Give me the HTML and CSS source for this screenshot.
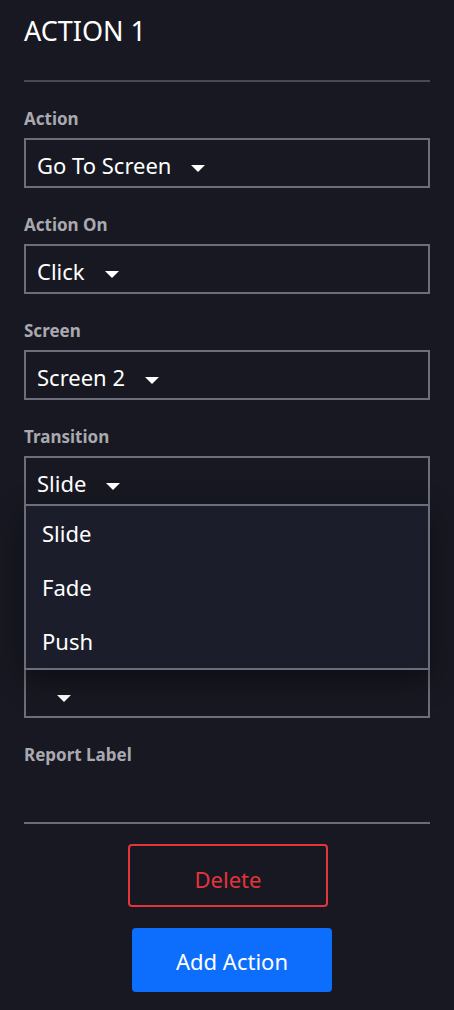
FILE: index.html
```html
<!DOCTYPE html>
<html>
<head>
<meta charset="utf-8">
<link rel="stylesheet" href="styles.css">
</head>
<body>
<div class="panel">
  <h2 class="title">ACTION 1</h2>
  <div class="rule"></div>

  <div class="field">
    <div class="label">Action</div>
    <div class="select"><span class="value">Go To Screen</span><span class="caret"></span></div>
  </div>

  <div class="field">
    <div class="label">Action On</div>
    <div class="select"><span class="value">Click</span><span class="caret"></span></div>
  </div>

  <div class="field">
    <div class="label">Screen</div>
    <div class="select"><span class="value">Screen 2</span><span class="caret"></span></div>
  </div>

  <div class="field dropdown-host">
    <div class="label">Transition</div>
    <div class="select"><span class="value">Slide</span><span class="caret"></span></div>
    <ul class="menu">
      <li>Slide</li>
      <li>Fade</li>
      <li>Push</li>
    </ul>
  </div>

  <div class="field">
    <div class="label"></div>
    <div class="select"><span class="value"></span></div>
  </div>

  <div class="field">
    <div class="label"></div>
    <div class="select"><span class="value"></span><span class="caret"></span></div>
  </div>

  <div class="field report">
    <div class="label">Report Label</div>
  </div>

  <div class="rule bottom"></div>

  <div class="buttons">
    <button class="btn delete">Delete</button>
    <button class="btn add">Add Action</button>
  </div>
</div>
</body>
</html>
```

FILE: styles.css
```css
html, body {
  margin: 0;
  padding: 0;
  background: #171821;
  height: 100%;
}
body {
  font-family: "Noto Sans", "Open Sans", sans-serif;
  color: #ffffff;
}
.panel {
  padding: 13px 24px 0 24px;
}
.title {
  margin: 0;
  font-size: 27px;
  font-weight: 400;
  line-height: 36px;
  height: 36px;
}
.rule {
  height: 2px;
  background: #474955;
  margin-top: 31px;
}
.field {
  margin-top: 26px;
}
.label {
  font-size: 17px;
  font-weight: 700;
  color: #a9a9af;
  line-height: 22px;
  height: 22px;
}
.select {
  margin-top: 8px;
  height: 50px;
  box-sizing: border-box;
  border: 2px solid #6c6e7c;
  display: flex;
  align-items: center;
  padding: 4px 10px 0 11px;
  font-size: 22px;
}
.value {
  line-height: 28px;
}
.caret {
  width: 0;
  height: 0;
  border-left: 7px solid transparent;
  border-right: 7px solid transparent;
  border-top: 7px solid #ffffff;
  margin-left: 20px;
  margin-top: 6px;
}
.dropdown-host {
  position: relative;
}
.menu {
  position: absolute;
  left: 0;
  right: 0;
  top: 78px;
  margin: 0;
  padding: 0;
  list-style: none;
  background: #1c1d2a;
  border: 2px solid #6c6e7c;
  height: 166px;
  box-sizing: border-box;
  z-index: 2;
  box-shadow: 0 10px 28px rgba(0, 0, 0, 0.4);
}
.menu li {
  font-size: 22px;
  line-height: 54px;
  height: 54px;
  padding-left: 16px;
}
.rule.bottom {
  margin-top: 56px;
  background: #6a6c78;
}
.buttons {
  display: flex;
  flex-direction: column;
  align-items: center;
  margin-top: 20px;
  gap: 21px;
}
.btn {
  width: 200px;
  font-family: "Noto Sans", "Open Sans", sans-serif;
  font-size: 22px;
  border-radius: 4px;
  cursor: pointer;
  box-sizing: border-box;
}
.delete {
  height: 63px;
  background: transparent;
  border: 2px solid #e4343c;
  color: #e4343c;
  margin-left: 2px;
  padding-top: 7px;
}
.add {
  height: 64px;
  background: #0d6efd;
  border: none;
  color: #ffffff;
  margin-left: 10px;
  padding-top: 3px;
}
```
